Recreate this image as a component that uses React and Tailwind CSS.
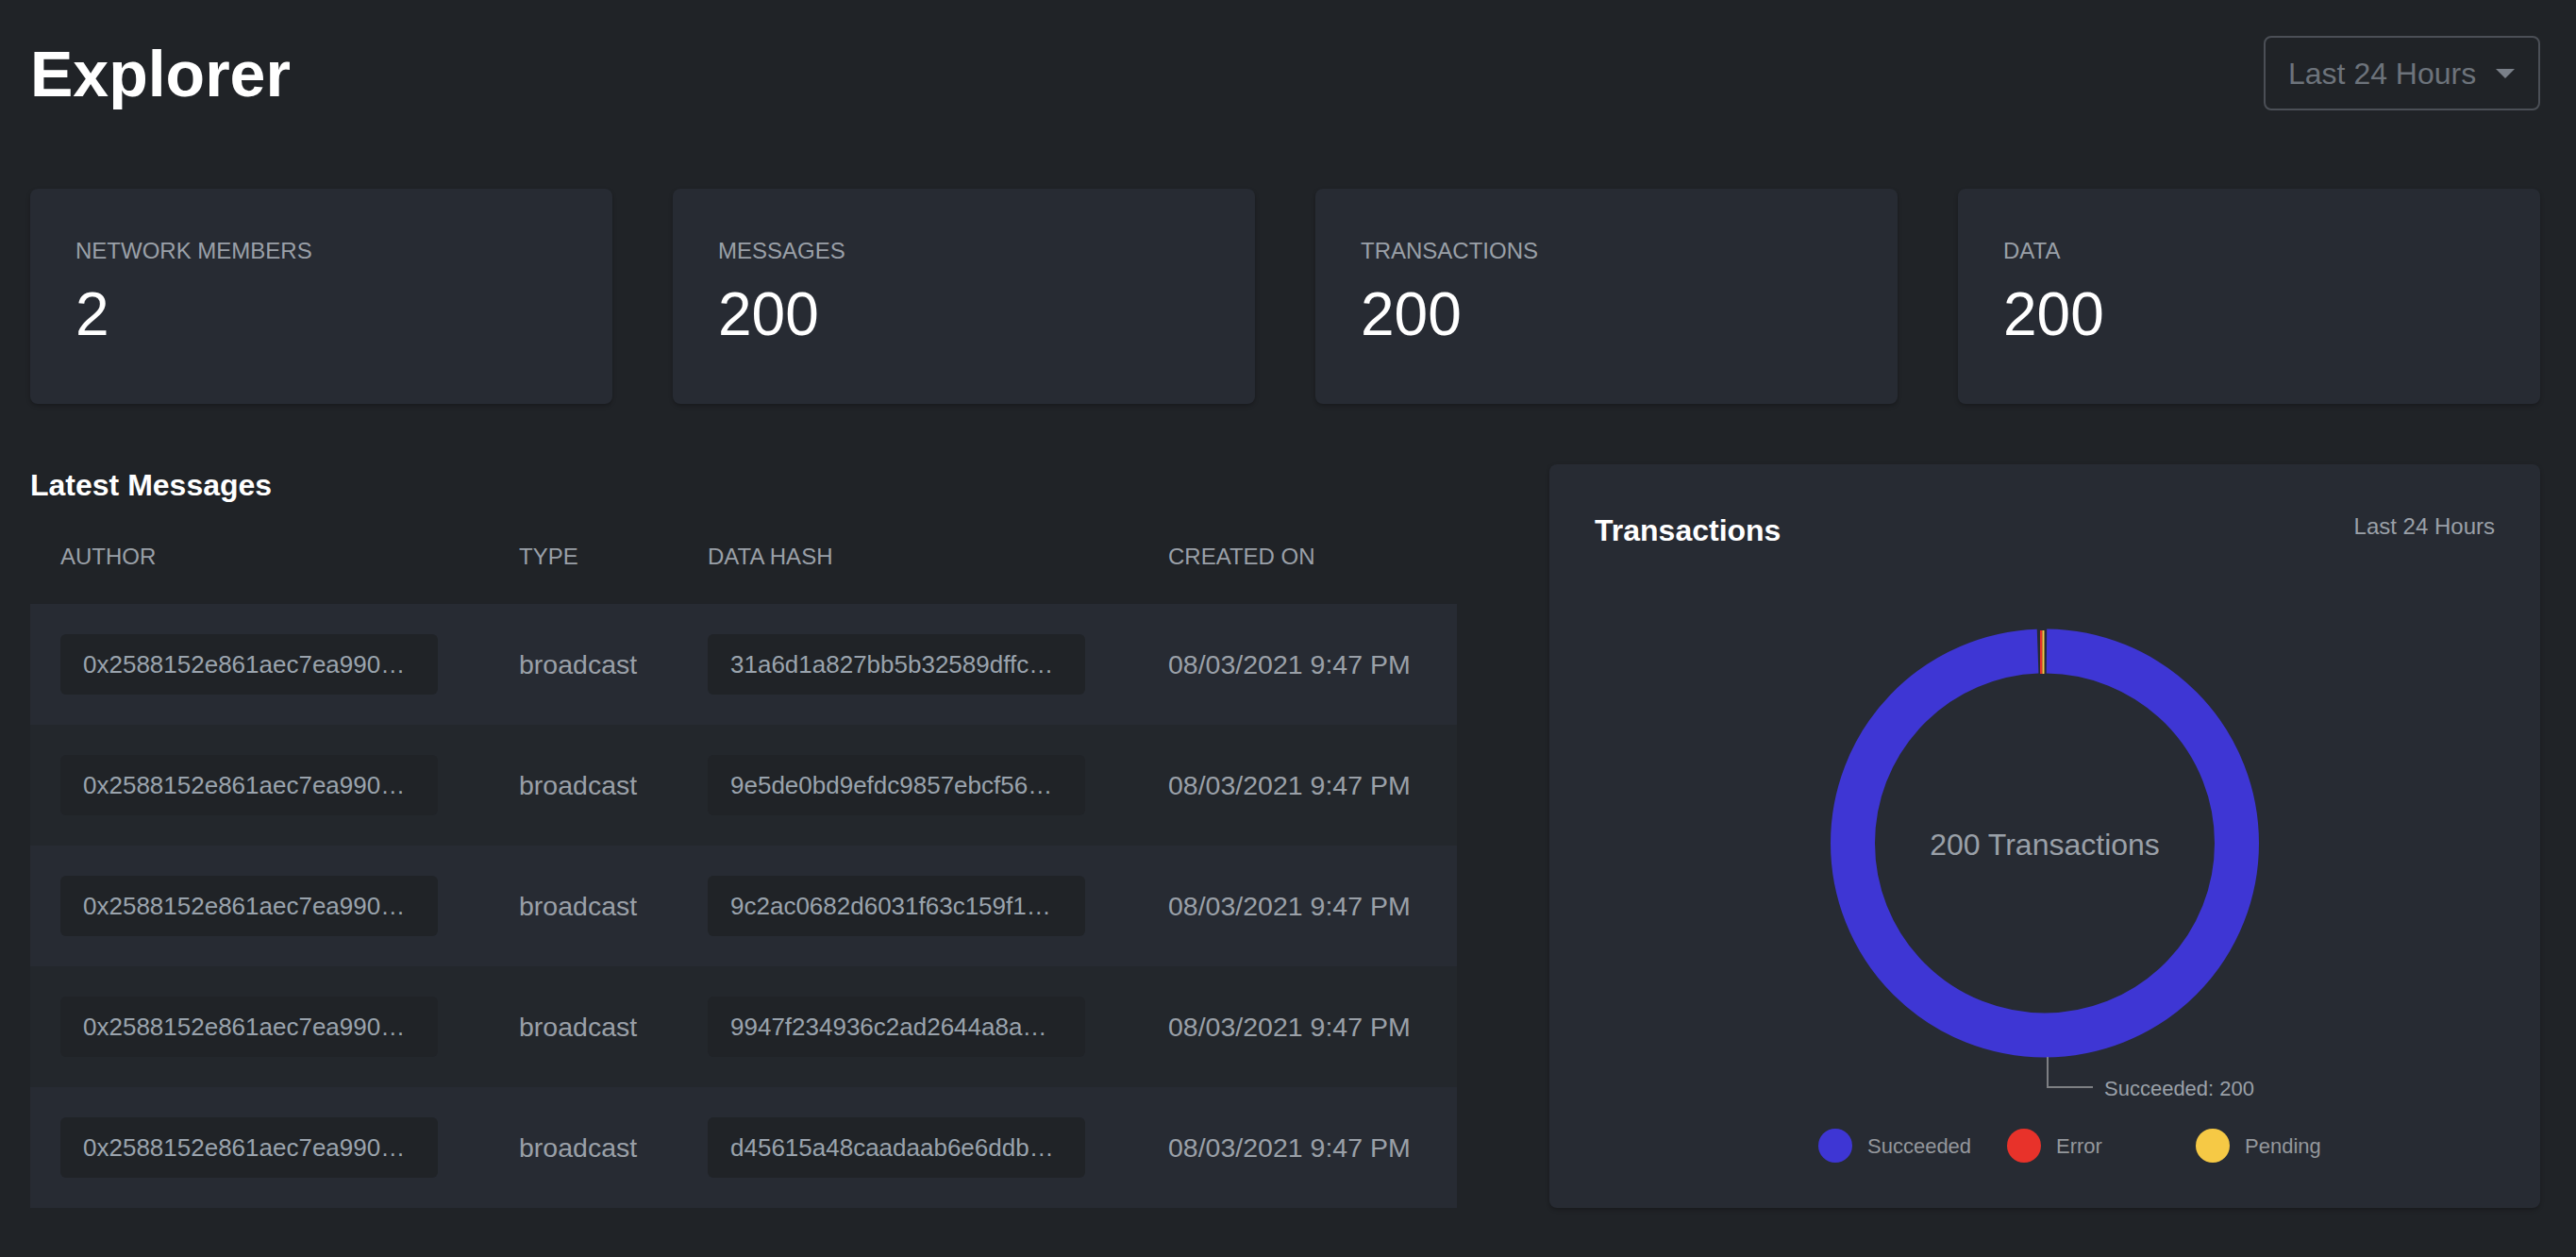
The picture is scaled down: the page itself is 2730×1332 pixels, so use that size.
import React from 'react';

const font = { fontFamily: '"Liberation Sans", Arial, Helvetica, sans-serif' };

const stats = [
  { label: 'NETWORK MEMBERS', value: '2' },
  { label: 'MESSAGES', value: '200' },
  { label: 'TRANSACTIONS', value: '200' },
  { label: 'DATA', value: '200' },
];

const author = '0x2588152e861aec7ea990\u2026';

const messages = [
  { hash: '31a6d1a827bb5b32589dffc\u2026' },
  { hash: '9e5de0bd9efdc9857ebcf56\u2026' },
  { hash: '9c2ac0682d6031f63c159f1\u2026' },
  { hash: '9947f234936c2ad2644a8a\u2026' },
  { hash: 'd45615a48caadaab6e6ddb\u2026' },
];

const legend = [
  { name: 'Succeeded', color: 'bg-[#3e36d4]' },
  { name: 'Error', color: 'bg-[#e8322a]' },
  { name: 'Pending', color: 'bg-[#f6c945]' },
];

function StatCard({ label, value }) {
  return (
    <div className="h-[228px] rounded-[8px] bg-[#272b33] pl-[48px] pt-[52px] shadow-[0_2px_4px_rgba(0,0,0,0.25)]">
      <div className="text-[24px] leading-[28px] text-[#9aa0a8]">{label}</div>
      <div className="mt-[17px] text-[64px] leading-[72px] text-white">{value}</div>
    </div>
  );
}

function Chip({ children }) {
  return (
    <div className="flex h-[64px] w-[400px] items-center overflow-hidden rounded-[6px] bg-[#202327] px-[24px]">
      <span className="truncate whitespace-nowrap text-[26px] text-[#9aa3ad]">{children}</span>
    </div>
  );
}

function Donut() {
  const cx = 477;
  const cy = 309.5;
  const r = 203.5;
  const c = 2 * Math.PI * r;
  return (
    <svg width="954" height="612" viewBox="0 0 954 612" className="block">
      <circle
        cx={cx}
        cy={cy}
        r={r}
        fill="none"
        stroke="#3e36d4"
        strokeWidth="47"
        strokeDasharray={`0 2 ${c - 10} 8`}
        transform={`rotate(-90 ${cx} ${cy})`}
      />
      <rect x="472" y="84" width="2.5" height="46" fill="#e8322a" />
      <rect x="474.5" y="84" width="2" height="46" fill="#f6c945" />
      <text x={cx} y="322" textAnchor="middle" fontSize="32" fill="#9aa0a8" style={font}>
        200 Transactions
      </text>
      <polyline points="480,536 480,568 528,568" fill="none" stroke="#7d7f83" strokeWidth="2" />
      <text x="540" y="577" fontSize="22" fill="#9aa0a8" style={font}>
        Succeeded: 200
      </text>
    </svg>
  );
}

export default function App() {
  return (
    <div className="min-h-screen w-full bg-[#202327] pl-[32px] pr-[38px] pt-[38px]" style={font}>
      <div className="flex items-start justify-between">
        <h1 className="text-[68px] font-bold leading-[80px] text-white">Explorer</h1>
        <div className="flex h-[79px] w-[293px] items-center justify-between rounded-[8px] border-2 border-[#4b4f56] pl-[24px] pr-[25px]">
          <span className="text-[32px] text-[#6d737b]">Last 24 Hours</span>
          <svg width="20" height="10" viewBox="0 0 20 10">
            <path d="M0 0 L20 0 L10 10 Z" fill="#7a8089" />
          </svg>
        </div>
      </div>

      <div className="mt-[82px] grid grid-cols-4 gap-[64px]">
        {stats.map((s) => (
          <StatCard key={s.label} {...s} />
        ))}
      </div>

      <div className="mt-[64px] flex items-stretch justify-between">
        <div className="w-[1512px]">
          <h2 className="text-[32px] font-bold leading-[44px] text-white">Latest Messages</h2>
          <div className="grid h-[104px] grid-cols-[486px_200px_488px_1fr] pl-[32px] pt-[38px] text-[24px] leading-[32px] text-[#9aa0a8]">
            <div>AUTHOR</div>
            <div>TYPE</div>
            <div>DATA HASH</div>
            <div>CREATED ON</div>
          </div>
          {messages.map((m, i) => (
            <div
              key={m.hash}
              className={`grid h-[128px] grid-cols-[486px_200px_488px_1fr] items-center pl-[32px] text-[28.5px] text-[#9aa0a8] ${
                i % 2 === 0 ? 'bg-[#272b33]' : 'bg-[#23272c]'
              }`}
            >
              <div>
                <Chip>{author}</Chip>
              </div>
              <div>broadcast</div>
              <div>
                <Chip>{m.hash}</Chip>
              </div>
              <div>08/03/2021 9:47 PM</div>
            </div>
          ))}
        </div>

        <div className="w-[1050px] rounded-[8px] bg-[#272b33] px-[48px] pt-[48px] shadow-[0_2px_4px_rgba(0,0,0,0.25)]">
          <div className="flex items-start justify-between">
            <h3 className="text-[32px] font-bold leading-[44px] text-white">Transactions</h3>
            <span className="mt-[4px] text-[24px] leading-[28px] text-[#9aa0a8]">Last 24 Hours</span>
          </div>
          <Donut />
          <div className="flex pl-[237px]">
            {legend.map((l) => (
              <div key={l.name} className="flex w-[200px] items-center gap-[16px]">
                <span className={`h-[36px] w-[36px] rounded-full ${l.color}`} />
                <span className="text-[22px] text-[#94979c]">{l.name}</span>
              </div>
            ))}
          </div>
        </div>
      </div>
    </div>
  );
}
